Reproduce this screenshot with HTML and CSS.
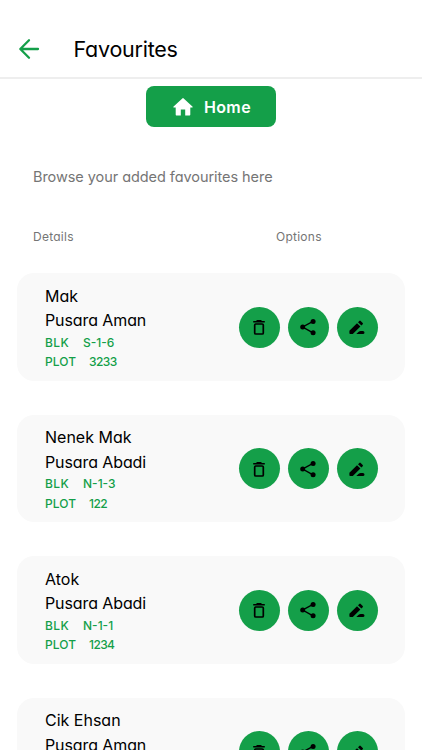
FILE: index.html
```
<!DOCTYPE html>
<html lang="en">
<head>
<meta charset="utf-8">
<title>Favourites</title>
<link rel="stylesheet" href="styles.css">
</head>
<body>
<svg class="defs" aria-hidden="true">
  <symbol id="trash" viewBox="0 0 18 18"><path d="M3.200 3.700h11.600M6.500 2.700h5" fill="none" stroke="currentColor" stroke-width="1.600"/><rect x="4.700" y="6" width="8.600" height="10" rx="1.100" fill="none" stroke="currentColor" stroke-width="1.700"/></symbol>
  <symbol id="share" viewBox="0 0 18 18"><path d="M14 3.300 3.700 9 14 14.800" fill="none" stroke="currentColor" stroke-width="1.400"/><circle cx="14.100" cy="3.400" r="2.500"/><circle cx="3.700" cy="9" r="2.500"/><circle cx="14.100" cy="14.700" r="2.500"/></symbol>
  <symbol id="edit" viewBox="0 0 18 18"><path d="M1.400 12.800 9 5.200l3.400 3.400-7.600 7.500H2.200a.8.800 0 0 1-.8-.8zM10 4.200l1.300-1.300a1 1 0 0 1 1.400 0l2 2a1 1 0 0 1 0 1.400l-1.300 1.300zM10.700 13.700c.6-.5 1.200-.8 2-.8h2.200a1.600 1.600 0 0 1 0 3.200H8.300z"/></symbol>
</svg>
<header class="bar">
  <svg class="back" viewBox="0 0 22 22"><path d="M20 11H2.500M11 2.300 2.300 11l8.700 8.700" fill="none" stroke="currentColor" stroke-width="2.300" stroke-linecap="round" stroke-linejoin="round"/></svg>
  <h1>Favourites</h1>
</header>
<main>
  <button class="home"><svg viewBox="0 0 20 18"><path d="M9.300.4a1 1 0 0 1 1.400 0l8.700 8c.5.5.3 1.200-.4 1.200h-1.700v6.900c0 .6-.4 1-1 1h-4.100v-6.100H7.800v6.100H3.700c-.6 0-1-.4-1-1V9.600H1c-.7 0-.9-.7-.4-1.200z"/></svg><span>Home</span></button>
  <p class="intro">Browse your added favourites here</p>
  <div class="heads"><span>Details</span><span class="opt">Options</span></div>
  <section class="list">
    <article class="card">
      <div class="info"><div class="name">Mak</div><div class="name place">Pusara Aman</div><div class="meta"><span class="blk">BLK</span><span>S-1-6</span></div><div class="meta"><span class="plot">PLOT</span><span class="num">3233</span></div></div>
      <div class="actions"><button><svg><use href="#trash"/></svg></button><button><svg><use href="#share"/></svg></button><button><svg><use href="#edit"/></svg></button></div>
    </article>
    <article class="card">
      <div class="info"><div class="name">Nenek Mak</div><div class="name place">Pusara Abadi</div><div class="meta"><span class="blk">BLK</span><span>N-1-3</span></div><div class="meta"><span class="plot">PLOT</span><span class="num">122</span></div></div>
      <div class="actions"><button><svg><use href="#trash"/></svg></button><button><svg><use href="#share"/></svg></button><button><svg><use href="#edit"/></svg></button></div>
    </article>
    <article class="card">
      <div class="info"><div class="name">Atok</div><div class="name place">Pusara Abadi</div><div class="meta"><span class="blk">BLK</span><span>N-1-1</span></div><div class="meta"><span class="plot">PLOT</span><span class="num">1234</span></div></div>
      <div class="actions"><button><svg><use href="#trash"/></svg></button><button><svg><use href="#share"/></svg></button><button><svg><use href="#edit"/></svg></button></div>
    </article>
    <article class="card">
      <div class="info"><div class="name">Cik Ehsan</div><div class="name place">Pusara Aman</div></div>
      <div class="actions"><button><svg><use href="#trash"/></svg></button><button><svg><use href="#share"/></svg></button><button><svg><use href="#edit"/></svg></button></div>
    </article>
  </section>
</main>
</body>
</html>
```
FILE: styles.css
```
* { box-sizing: border-box; }
html { height: 750px; overflow: hidden; }
body {
  margin: 0;
  height: 750px;
  overflow: hidden;
  background: #fff;
  color: #000;
  font-family: Inter, "Liberation Sans", sans-serif;
  font-feature-settings: "cv11";
}
.defs { display: none; }
.bar {
  display: flex;
  align-items: center;
  height: 79px;
  padding: 20px 0 0 18px;
  border-bottom: 2px solid #eee;
}
.back { width: 22px; height: 22px; color: #149f49; }
h1 {
  margin: 0 0 0 33.500px;
  font-size: 21.500px;
  line-height: 26px;
  font-weight: 400;
  letter-spacing: -0.250px;
}
main { display: flex; flex-direction: column; }
button { border: 0; padding: 0; font: inherit; }
.home {
  display: flex;
  align-items: center;
  align-self: center;
  width: 130px;
  height: 41px;
  margin-top: 7px;
  padding-left: 27px;
  gap: 11px;
  border-radius: 8px;
  background: #149f49;
  color: #fff;
  font-size: 16px;
  font-weight: 600;
  letter-spacing: 0.350px;
}
.home svg { width: 20px; height: 18px; fill: currentColor; }
.intro {
  margin: 40px 0 0 33px;
  font-size: 14.500px;
  line-height: 20px;
  letter-spacing: -0.060px;
  color: #757575;
}
.heads {
  display: flex;
  margin: 42px 0 0 33px;
  font-size: 12px;
  line-height: 16px;
  letter-spacing: 0.250px;
  color: #757575;
}
.heads span { width: 243px; }
.heads .opt { width: auto; }
.list {
  display: flex;
  flex-direction: column;
  gap: 34px;
  margin: 28.300px 17px 0;
}
.card {
  display: flex;
  flex: none;
  justify-content: space-between;
  height: 107.500px;
  padding: 10.500px 27.400px 0 28px;
  border-radius: 17px;
  background: #f9f9f9;
}
.name { font-size: 16px; line-height: 24.500px; white-space: nowrap; }
.place { letter-spacing: -0.100px; }
.meta {
  display: flex;
  font-size: 12px;
  line-height: 19.500px;
  font-weight: 500;
  color: #149f49;
}
.blk { width: 38px; letter-spacing: 0.400px; }
.plot { width: 44px; letter-spacing: 0.100px; }
.num { letter-spacing: -0.600px; }
.actions { display: flex; gap: 8px; margin-top: 23px; }
.actions button {
  display: grid;
  place-items: center;
  width: 41px;
  height: 41px;
  border-radius: 50%;
  background: #149f49;
  color: #000;
}
.actions svg { width: 18px; height: 18px; }
```
